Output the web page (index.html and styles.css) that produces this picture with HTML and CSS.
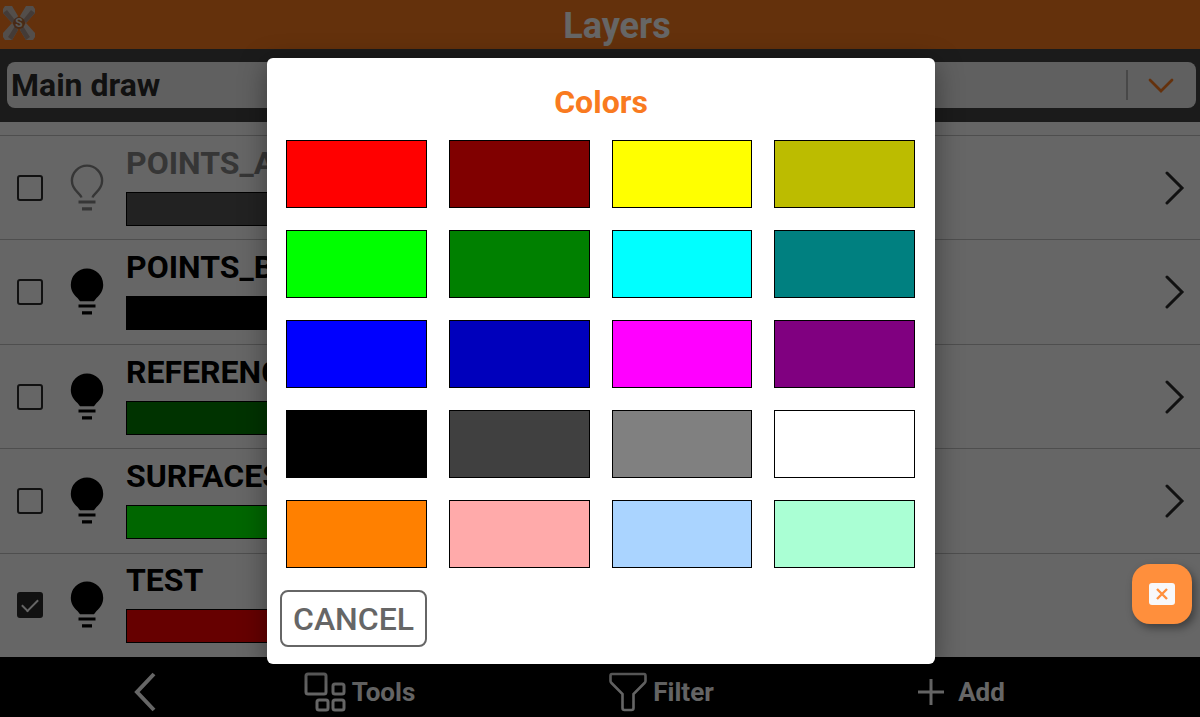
FILE: index.html
```html
<!DOCTYPE html>
<html lang="en">
<head>
<meta charset="utf-8">
<meta name="viewport" content="width=device-width, initial-scale=1">
<title>Layers</title>
<link rel="stylesheet" href="styles.css">
</head>
<body>
<svg class="symbols" aria-hidden="true">
  <symbol id="bulb" viewBox="0 0 34 48">
    <path d="M17 .5A16.200 16.200 0 0 0 .8 16.700C.8 22.500 3.500 26.500 7.500 30L10 33.300H24L26.500 30C30.500 26.500 33.200 22.500 33.200 16.700A16.200 16.200 0 0 0 17 .5Z" fill="currentColor"/>
    <path d="M8.500 38H25.500M12 44.800H22" stroke="currentColor" stroke-width="3.200" fill="none"/>
  </symbol>
  <symbol id="bulb-off" viewBox="0 0 34 48">
    <path d="M11.500 33.500C10 28.500 1.900 26.500 1.900 16.700A15.100 15.100 0 0 1 32.100 16.700C32.100 26.500 24 28.500 22.500 33.500" fill="none" stroke="currentColor" stroke-width="2.400"/>
    <path d="M8.500 38H25.500M12 44.800H22" stroke="currentColor" stroke-width="3.200" fill="none"/>
  </symbol>
  <symbol id="next" viewBox="0 0 20 34">
    <path d="M2 2L17 17L2 32" fill="none" stroke="currentColor" stroke-width="3" stroke-linecap="round"/>
  </symbol>
</svg>

<div class="app">
  <header class="header">
    <svg class="logo" viewBox="0 0 34 36" aria-hidden="true">
      <g fill="#d0c4bc">
        <path d="M3 1H10L16 11L14 15L10 18L1 8V4Z"/>
        <path d="M31 1H24L18 11L20 15L24 18L33 8V4Z"/>
        <path d="M3 35H10L16 25L14 21L10 18L1 28V32Z"/>
        <path d="M31 35H24L18 25L20 21L24 18L33 28V32Z"/>
      </g>
      <g fill="#aa958a">
        <path d="M1 8L5 5L13 15L10 18Z"/>
        <path d="M33 8L29 5L21 15L24 18Z"/>
        <path d="M10 35L6 32L13 21L16 25Z"/>
        <path d="M24 35L28 32L21 21L18 25Z"/>
      </g>
      <circle cx="17" cy="18" r="6" fill="#b46a38"/>
      <text class="logo-letter" x="17" y="22" text-anchor="middle">S</text>
    </svg>
    <h1 class="title">Layers</h1>
  </header>

  <div class="toolbar">
    <div class="picker">
      <select class="picker-select" aria-label="Drawing"><option>Main draw</option></select>
      <svg class="picker-arrow" viewBox="0 0 26 16" aria-hidden="true"><path d="M2 3L13 14L24 3" fill="none" stroke="currentColor" stroke-width="2.800" stroke-linecap="round"/></svg>
    </div>
  </div>

  <main class="list">
    <div class="row">
      <input class="check" type="checkbox" aria-label="Select POINTS_A">
      <svg class="bulb off"><use href="#bulb-off"/></svg>
      <div class="layer"><span class="name off">POINTS_A</span><span class="bar dark-gray"></span></div>
      <button class="open" aria-label="Open POINTS_A"><svg class="next"><use href="#next"/></svg></button>
    </div>
    <div class="row">
      <input class="check" type="checkbox" aria-label="Select POINTS_B">
      <svg class="bulb"><use href="#bulb"/></svg>
      <div class="layer"><span class="name">POINTS_B</span><span class="bar black"></span></div>
      <button class="open" aria-label="Open POINTS_B"><svg class="next"><use href="#next"/></svg></button>
    </div>
    <div class="row">
      <input class="check" type="checkbox" aria-label="Select REFERENCE">
      <svg class="bulb"><use href="#bulb"/></svg>
      <div class="layer"><span class="name">REFERENCE</span><span class="bar green"></span></div>
      <button class="open" aria-label="Open REFERENCE"><svg class="next"><use href="#next"/></svg></button>
    </div>
    <div class="row">
      <input class="check" type="checkbox" aria-label="Select SURFACES">
      <svg class="bulb"><use href="#bulb"/></svg>
      <div class="layer"><span class="name">SURFACES</span><span class="bar lime"></span></div>
      <button class="open" aria-label="Open SURFACES"><svg class="next"><use href="#next"/></svg></button>
    </div>
    <div class="row">
      <input class="check" type="checkbox" aria-label="Select TEST" checked>
      <svg class="bulb"><use href="#bulb"/></svg>
      <div class="layer"><span class="name">TEST</span><span class="bar red"></span></div>
    </div>
  </main>

  <footer class="footer">
    <button class="action" aria-label="Back">
      <svg width="24" height="40" viewBox="0 0 24 40"><path d="M21 2L4 20L21 38" fill="none" stroke="currentColor" stroke-width="4"/></svg>
    </button>
    <button class="action">
      <svg width="42" height="40" viewBox="0 0 42 40" fill="none" stroke="currentColor" stroke-width="3"><rect x="2" y="2" width="20" height="20" rx="2"/><rect x="29" y="12" width="11" height="10" rx="2"/><rect x="13" y="28" width="11" height="10" rx="2"/><rect x="29" y="28" width="11" height="10" rx="2"/></svg>
      <span>Tools</span>
    </button>
    <button class="action filter">
      <svg width="38" height="40" viewBox="0 0 38 40"><path d="M3 2H35Q36.500 2 36.500 4V9Q36.500 10 35.500 11L24.500 22V36Q24.500 38 22.500 38H15.500Q13.500 38 13.500 36V22L2.500 11Q1.500 10 1.500 9V4Q1.500 2 3 2Z" fill="none" stroke="currentColor" stroke-width="2.600"/></svg>
      <span>Filter</span>
    </button>
    <button class="action add">
      <svg width="26" height="26" viewBox="0 0 26 26"><path d="M13 0V26M0 13H26" stroke="currentColor" stroke-width="3"/></svg>
      <span>Add</span>
    </button>
  </footer>
</div>

<div class="overlay">
  <div class="dialog" role="dialog" aria-modal="true" aria-labelledby="dialog-title">
    <h2 class="dialog-title" id="dialog-title">Colors</h2>
    <div class="swatches">
      <button class="swatch red" aria-label="Red"></button>
      <button class="swatch maroon" aria-label="Maroon"></button>
      <button class="swatch yellow" aria-label="Yellow"></button>
      <button class="swatch olive" aria-label="Olive"></button>
      <button class="swatch lime" aria-label="Lime"></button>
      <button class="swatch green" aria-label="Green"></button>
      <button class="swatch cyan" aria-label="Cyan"></button>
      <button class="swatch teal" aria-label="Teal"></button>
      <button class="swatch blue" aria-label="Blue"></button>
      <button class="swatch navy" aria-label="Dark blue"></button>
      <button class="swatch magenta" aria-label="Magenta"></button>
      <button class="swatch purple" aria-label="Purple"></button>
      <button class="swatch black" aria-label="Black"></button>
      <button class="swatch charcoal" aria-label="Dark gray"></button>
      <button class="swatch gray" aria-label="Gray"></button>
      <button class="swatch white" aria-label="White"></button>
      <button class="swatch orange" aria-label="Orange"></button>
      <button class="swatch pink" aria-label="Pink"></button>
      <button class="swatch sky" aria-label="Light blue"></button>
      <button class="swatch mint" aria-label="Mint"></button>
    </div>
    <button class="cancel">CANCEL</button>
  </div>
</div>

<button class="fab" aria-label="Close">
  <svg width="26" height="22" viewBox="0 0 26 22"><rect width="26" height="22" rx="3" fill="#f8f8fa"/><path d="M8 6L18 16M18 6L8 16" stroke="#ff8f3c" stroke-width="2.400"/></svg>
</button>
</body>
</html>
```
FILE: styles.css
```css
* { box-sizing: border-box; }

body {
  margin: 0;
  font-family: Roboto, "Liberation Sans", sans-serif;
  background: #fff;
}

button {
  padding: 0;
  border: 0;
  background: none;
  color: inherit;
  font: inherit;
}

svg { display: block; flex: none; }

.symbols { position: absolute; width: 0; height: 0; }

.app {
  display: flex;
  flex-direction: column;
  min-height: 100vh;
}

.header {
  display: flex;
  align-items: center;
  height: 49px;
  padding-left: 2px;
  background: #f97a20;
}

.logo { width: 34px; height: 36px; margin-bottom: 3px; }
.logo-letter { font-size: 12px; font-weight: 700; fill: #ddd; }

.title {
  flex: 1;
  margin: 0;
  padding: 2px 2px 0 0;
  color: #fff;
  font-size: 36px;
  line-height: 48px;
  font-weight: 700;
  text-align: center;
}

.toolbar {
  padding: 13px 4px 14px 7px;
  background: #444;
}

.picker {
  display: flex;
  align-items: center;
  height: 46px;
  padding-right: 22px;
  border-radius: 8px;
  background: #f1f1f1;
}

.picker-select {
  flex: 1;
  height: 30px;
  padding: 0 0 0 4px;
  border: 0;
  border-right: 2px solid #b4b4b4;
  appearance: none;
  background: none;
  color: #2b2b2b;
  font-family: inherit;
  font-size: 32px;
  line-height: 30px;
  font-weight: 700;
}

.picker-arrow {
  width: 26px;
  height: 16px;
  margin-left: 20px;
  color: #f97a20;
}

.list {
  display: flex;
  flex: 1;
  flex-direction: column;
  padding-top: 13px;
}

.row {
  display: flex;
  flex: 1;
  align-items: center;
  min-height: 100px;
  padding: 0 15px 0 17px;
  border-top: 1px solid #c4c4c4;
}

.check {
  display: grid;
  place-items: center;
  flex: none;
  width: 26px;
  height: 26px;
  margin: 0;
  border: 2px solid #2b2b2b;
  border-radius: 3px;
  appearance: none;
}

.check:checked { background: #2b2b2b; }

.check:checked::after {
  content: "";
  width: 14px;
  height: 7px;
  margin-bottom: 4px;
  border: solid #fff;
  border-width: 0 0 2px 2px;
  transform: rotate(-45deg);
}

.bulb {
  width: 34px;
  height: 48px;
  margin: 0 22px 0 27px;
  color: #000;
}

.bulb.off, .name.off { color: #888; }

.layer {
  display: flex;
  flex: 1;
  flex-direction: column;
  gap: 10px;
  padding-bottom: 6px;
}

.name {
  font-size: 32px;
  line-height: 38px;
  font-weight: 700;
}

.bar {
  width: 50%;
  height: 34px;
  border: 1px solid #000;
}

.open { color: #2b2b2b; }
.next { width: 20px; height: 34px; }

.footer {
  display: grid;
  grid-template-columns: 129fr 301fr 301fr 301fr;
  height: 60px;
  padding: 10px 88px 0 80px;
  background: #000;
}

.action {
  display: flex;
  align-items: center;
  justify-content: center;
  gap: 6px;
  color: #fff;
  font-size: 26px;
  font-weight: 700;
}

.action.filter { padding-left: 2px; }
.action.add { gap: 14px; }

.overlay {
  position: absolute;
  inset: 0;
  display: flex;
  align-items: center;
  justify-content: center;
  padding: 5px 0 0 2px;
  background: rgba(0, 0, 0, 0.6);
}

.dialog {
  width: 668px;
  max-width: 100%;
  padding: 24px 13px 17px;
  border-radius: 6px;
  background: #fff;
  box-shadow: 0 6px 28px rgba(0, 0, 0, 0.4);
}

.dialog-title {
  margin: 0 0 18px;
  color: #f97a20;
  font-size: 32px;
  line-height: 40px;
  font-weight: 700;
  text-align: center;
}

.swatches {
  display: grid;
  grid-template-columns: repeat(4, 1fr);
  gap: 22px;
  margin: 0 7px 22px 6px;
}

.swatch {
  height: 68px;
  border: 1px solid #000;
}

.red { background: #f00; }
.maroon { background: #800000; }
.yellow { background: #ff0; }
.olive { background: #bcbc00; }
.lime { background: #0f0; }
.green { background: #008000; }
.cyan { background: #0ff; }
.teal { background: #008080; }
.blue { background: #00f; }
.navy { background: #0000bc; }
.magenta { background: #f0f; }
.purple { background: #800080; }
.black { background: #000; }
.charcoal { background: #404040; }
.gray { background: #808080; }
.dark-gray { background: #555; }
.white { background: #fff; }
.orange { background: #ff8000; }
.pink { background: #ffaaaa; }
.sky { background: #aad4ff; }
.mint { background: #aaffd4; }

.cancel {
  display: block;
  height: 57px;
  padding: 0 11px;
  border: 2px solid #666;
  border-radius: 8px;
  color: #666;
  font-size: 32px;
  font-weight: 500;
}

.fab {
  position: absolute;
  right: 8px;
  bottom: 93px;
  display: grid;
  place-items: center;
  width: 60px;
  height: 60px;
  border-radius: 18px;
  background: #ff8f3c;
  box-shadow: 3px 4px 8px rgba(0, 0, 0, 0.4);
}
```
